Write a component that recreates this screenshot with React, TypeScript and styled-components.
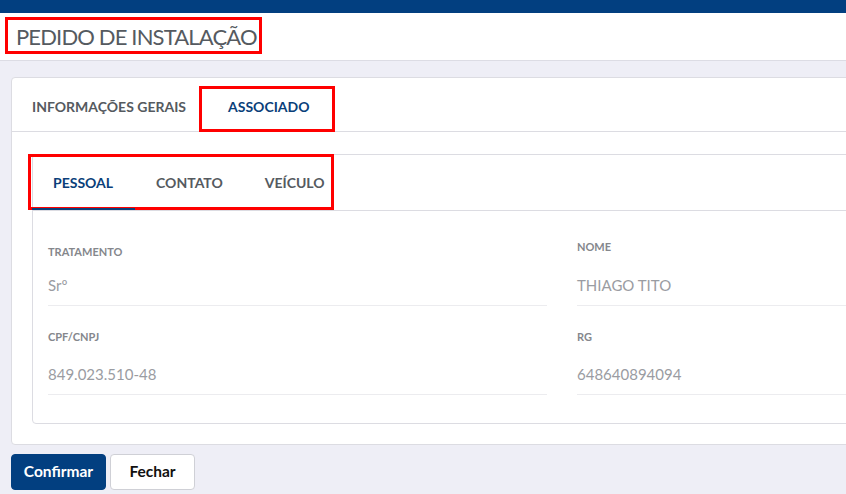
import React from "react";
import styled, { createGlobalStyle, css } from "styled-components";

const GlobalStyle = createGlobalStyle`
  html, body {
    margin: 0;
    padding: 0;
    background: #eeeef6;
    font-family: "Lato", "Noto Sans", sans-serif;
    overflow: hidden;
  }
  * { box-sizing: border-box; }
`;

const NAVY = "#023f80";
const MARK = "#ff0000";

const Page = styled.div`
  width: 846px;
  height: 494px;
  overflow: hidden;
  display: flex;
  flex-direction: column;
`;

const TopBar = styled.div`
  height: 13px;
  background: ${NAVY};
  flex-shrink: 0;
`;

const Header = styled.header`
  height: 48px;
  background: #fff;
  border-bottom: 1px solid #dcdce4;
  padding: 4px 0 0 5px;
  flex-shrink: 0;
`;

const Title = styled.h1`
  margin: 0;
  display: inline-flex;
  align-items: center;
  height: 37px;
  padding: 1px 2px 0 8px;
  border: 3px solid ${MARK};
  font-size: 22px;
  font-weight: 400;
  color: #555a60;
  letter-spacing: -0.85px;
`;

const Main = styled.main`
  padding: 16px 0 0 11px;
  display: flex;
  flex-direction: column;
  gap: 9px;
`;

const Card = styled.section`
  width: 1110px;
  background: #fff;
  border: 1px solid #dcdce2;
  border-radius: 4px;
  padding-bottom: 20px;
`;

const TabBar = styled.nav`
  display: flex;
  align-items: flex-end;
  height: 54px;
  padding-left: 20px;
  gap: 13px;
  border-bottom: 1px solid #dcdce2;
`;

const Tab = styled.div<{ $active?: boolean; $marked?: boolean }>`
  display: flex;
  align-items: center;
  height: 46px;
  padding-bottom: 6px;
  font-size: 14px;
  font-weight: 700;
  color: ${(p) => (p.$active ? "#0a3f7a" : "#555a60")};
  margin-bottom: -1px;
  ${(p) =>
    p.$marked &&
    css`
      border: 3px solid ${MARK};
      padding: 0 22px 6px 26px;
    `}
`;

const InnerCard = styled.div`
  margin: 22px 0 0 20px;
  border: 1px solid #dcdce2;
  border-radius: 4px;
  background: #fff;
`;

const SubTabBar = styled.nav`
  display: flex;
  height: 56px;
  border-bottom: 1px solid #dcdce2;
`;

const SubTabList = styled.div`
  display: flex;
  margin: -1px 0 -1px -5px;
  padding-left: 1px;
  border: 3px solid ${MARK};
  height: 56px;
`;

const SubTab = styled.div<{ $active?: boolean }>`
  display: flex;
  align-items: center;
  padding: 0 21px;
  font-size: 14px;
  font-weight: 700;
  color: ${(p) => (p.$active ? "#0a3f7a" : "#555a60")};
  border-bottom: 2px solid ${(p) => (p.$active ? "#0a3f7a" : "transparent")};
  margin-bottom: -3px;
  &:first-child {
    padding-right: 22px;
  }
  &:last-child {
    padding-right: 6px;
  }
`;

const Fields = styled.div`
  display: grid;
  grid-template-columns: 499px 499px;
  column-gap: 30px;
  row-gap: 23px;
  padding: 33px 15px 28px;
`;

const Field = styled.div`
  display: flex;
  flex-direction: column;
  border-bottom: 1px solid #ececef;
  padding-bottom: 10px;
`;

const Label = styled.span<{ $lift?: number; $gap: number }>`
  font-size: 11px;
  font-weight: 700;
  line-height: 16px;
  color: #85878c;
  margin-top: ${(p) => -(p.$lift ?? 0)}px;
  margin-bottom: ${(p) => p.$gap + (p.$lift ?? 0)}px;
`;

const Value = styled.span`
  font-size: 15px;
  line-height: 20px;
  color: #9a9ca2;
`;

const Actions = styled.div`
  display: flex;
  gap: 4px;
`;

const Button = styled.button<{ $primary?: boolean }>`
  height: 36px;
  border-radius: 4px;
  font-family: inherit;
  font-size: 15.5px;
  font-weight: 700;
  cursor: pointer;
  padding: 0 0 2px;
  ${(p) =>
    p.$primary
      ? css`
          width: 95px;
          background: ${NAVY};
          border: 1px solid ${NAVY};
          color: #fff;
        `
      : css`
          width: 85px;
          background: #fff;
          border: 1px solid #cfd0d6;
          color: #111;
        `}
`;

const fields = [
  { label: "TRATAMENTO", value: "Srº", gap: 15 },
  { label: "NOME", value: "THIAGO TITO", gap: 15, lift: 5 },
  { label: "CPF/CNPJ", value: "849.023.510-48", gap: 19 },
  { label: "RG", value: "648640894094", gap: 19 },
];

export default function App() {
  return (
    <>
      <GlobalStyle />
      <Page>
        <TopBar />
        <Header>
          <Title>PEDIDO DE INSTALAÇÃO</Title>
        </Header>
        <Main>
          <Card>
            <TabBar>
              <Tab>INFORMAÇÕES GERAIS</Tab>
              <Tab $active $marked>
                ASSOCIADO
              </Tab>
            </TabBar>
            <InnerCard>
              <SubTabBar>
                <SubTabList>
                  <SubTab $active>PESSOAL</SubTab>
                  <SubTab>CONTATO</SubTab>
                  <SubTab>VEÍCULO</SubTab>
                </SubTabList>
              </SubTabBar>
              <Fields>
                {fields.map((f) => (
                  <Field key={f.label}>
                    <Label $gap={f.gap} $lift={f.lift}>
                      {f.label}
                    </Label>
                    <Value>{f.value}</Value>
                  </Field>
                ))}
              </Fields>
            </InnerCard>
          </Card>
          <Actions>
            <Button $primary>Confirmar</Button>
            <Button>Fechar</Button>
          </Actions>
        </Main>
      </Page>
    </>
  );
}
